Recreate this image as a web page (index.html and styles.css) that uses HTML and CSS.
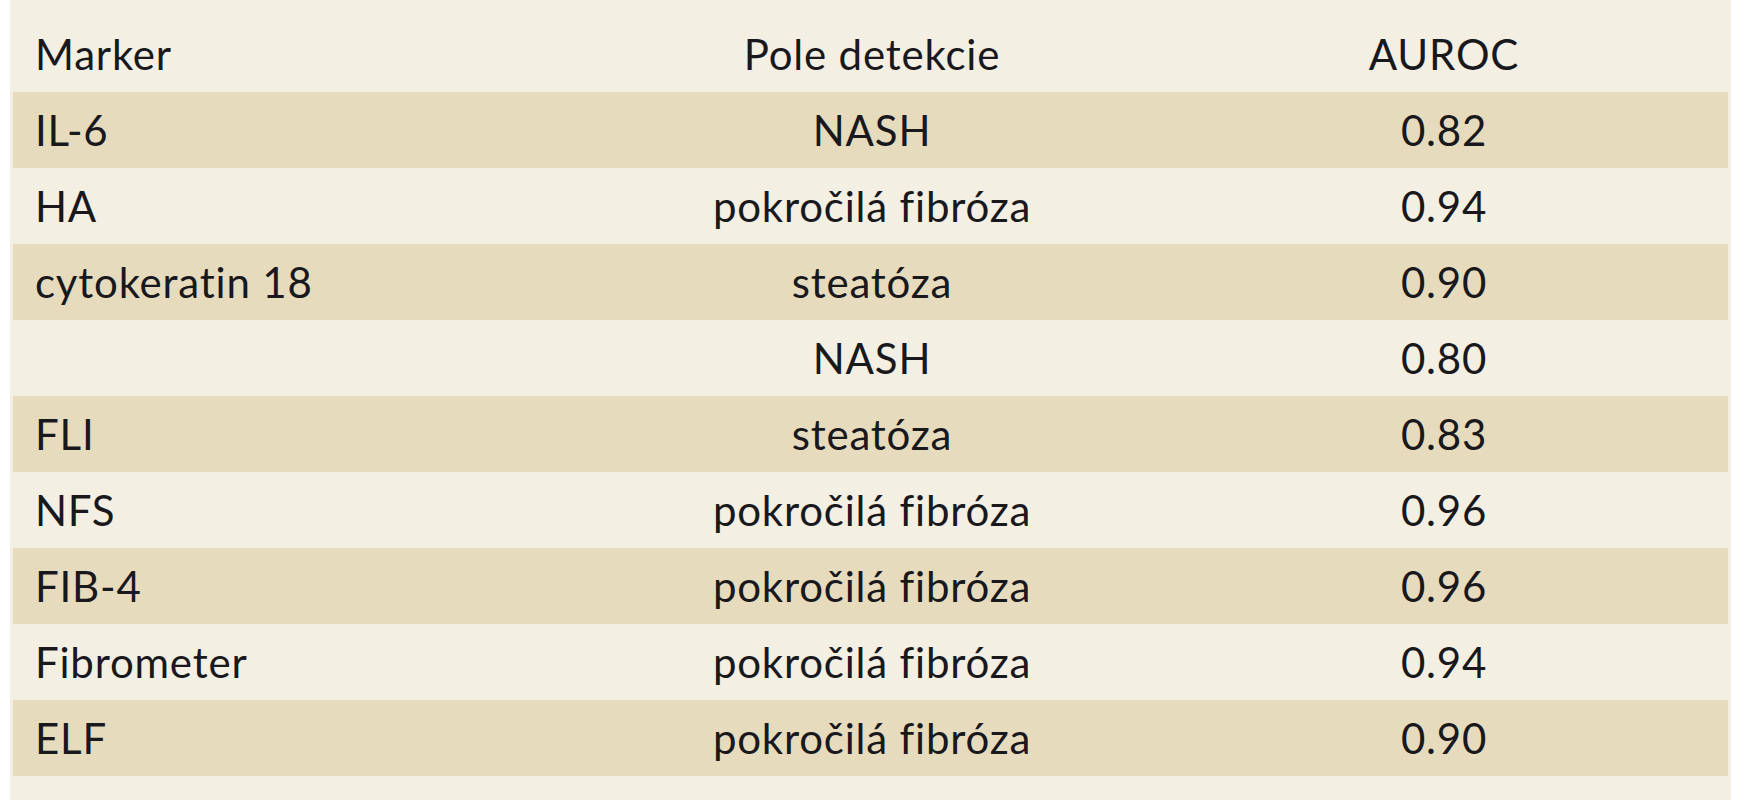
FILE: index.html
```html
<!DOCTYPE html>
<html lang="sk">
<head>
<meta charset="utf-8">
<title>Markery</title>
<link rel="stylesheet" href="styles.css">
</head>
<body>
<div class="sheet">
  <div class="table">
    <div class="row head">
      <div class="c1">Marker</div>
      <div class="c2">Pole detekcie</div>
      <div class="c3">AUROC</div>
    </div>
    <div class="row odd"><div class="c1">IL-6</div><div class="c2">NASH</div><div class="c3">0.82</div></div>
    <div class="row"><div class="c1">HA</div><div class="c2">pokročilá fibróza</div><div class="c3">0.94</div></div>
    <div class="row odd"><div class="c1">cytokeratin 18</div><div class="c2">steatóza</div><div class="c3">0.90</div></div>
    <div class="row"><div class="c1"></div><div class="c2">NASH</div><div class="c3">0.80</div></div>
    <div class="row odd"><div class="c1">FLI</div><div class="c2">steatóza</div><div class="c3">0.83</div></div>
    <div class="row"><div class="c1">NFS</div><div class="c2">pokročilá fibróza</div><div class="c3">0.96</div></div>
    <div class="row odd"><div class="c1">FIB-4</div><div class="c2">pokročilá fibróza</div><div class="c3">0.96</div></div>
    <div class="row"><div class="c1">Fibrometer</div><div class="c2">pokročilá fibróza</div><div class="c3">0.94</div></div>
    <div class="row odd"><div class="c1">ELF</div><div class="c2">pokročilá fibróza</div><div class="c3">0.90</div></div>
  </div>
</div>
</body>
</html>
```

FILE: styles.css
```css
html, body {
  margin: 0;
  padding: 0;
  background: #ffffff;
}
body {
  font-family: Lato, "Open Sans", "DejaVu Sans", sans-serif;
  color: #18181d;
}
.sheet {
  margin-left: 10px;
  width: 1721px;
  height: 800px;
  background: #f4efe3;
  padding: 0 3px;
  box-sizing: border-box;
  overflow: hidden;
}
.table {
  display: flex;
  flex-direction: column;
}
.row {
  display: grid;
  grid-template-columns: 571px 576px 568px;
  height: 76px;
  line-height: 76px;
  font-size: 42px;
  letter-spacing: 0.8px;
  white-space: nowrap;
}
.row.head {
  height: 92px;
  padding-top: 16px;
  box-sizing: border-box;
}
.row.odd {
  background: #e6dbbc;
}
.c1 {
  padding-left: 22px;
}
.c2, .c3 {
  text-align: center;
}
```
